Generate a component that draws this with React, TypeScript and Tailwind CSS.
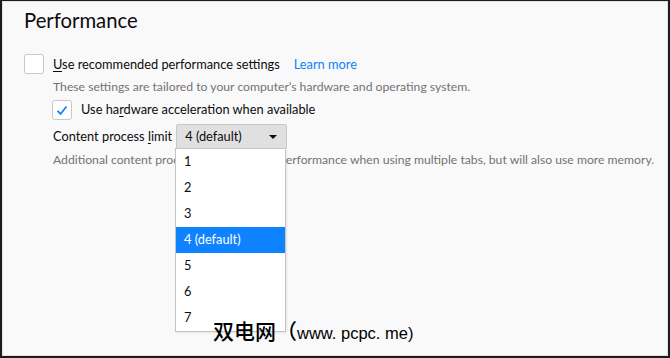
import React from 'react';

const options = ['1', '2', '3', '4 (default)', '5', '6', '7'];

const Checkbox = ({ checked }: { checked?: boolean }) => (
  <div className="w-[20px] h-[20px] shrink-0 rounded-[3px] border border-[#c8c8cc] bg-white flex items-center justify-center">
    {checked && (
      <svg width="12" height="11" viewBox="0 0 12 11">
        <path d="M1.5 5.8 L4.6 9 L10.5 1.5" fill="none" stroke="#0a84ff" strokeWidth="1.8" />
      </svg>
    )}
  </div>
);

export default function App() {
  return (
    <div
      className="relative w-[670px] h-[358px] overflow-hidden border-t border-l-2 border-r-2 border-b-2 border-[#1c1c1c] bg-[#f9f9fa] text-[#0c0c0d]"
      style={{ fontFamily: 'Lato, "Open Sans", sans-serif' }}
    >
      <div className="h-full border border-[#e2e2e4] pl-[21px] pt-[3px]">
        <h1 className="text-[20.3px] leading-[30px] font-normal">Performance</h1>

        <div className="mt-[19px] flex items-center h-[20px]">
          <Checkbox />
          <span className="ml-[9px] mt-[1px] text-[12.8px]">
            <span className="underline underline-offset-2">U</span>se recommended performance settings
          </span>
          <span className="ml-[14px] mt-[1px] text-[12.8px] text-[#0a84ff]">Learn more</span>
        </div>

        <p className="mt-[3px] ml-[29px] h-[20px] leading-[20px] text-[12.2px] text-[#737373]">
          These settings are tailored to your computer’s hardware and operating system.
        </p>

        <div className="mt-[3px] ml-[28px] flex items-center h-[20px]">
          <Checkbox checked />
          <span className="ml-[9px] text-[12.8px]">
            Use ha<span className="underline underline-offset-2">r</span>dware acceleration when available
          </span>
        </div>

        <div className="mt-[4px] ml-[29px] flex items-center h-[25px]">
          <span className="text-[12.8px]">
            Content process <span className="underline underline-offset-2">l</span>imit
          </span>
          <div className="ml-[4px] w-[111px] h-[25px] rounded-[2px] border border-[#c9c9cc] bg-[#e0e0e1] flex items-center justify-between pl-[8px] pr-[9px]">
            <span className="text-[12.8px]">4 (default)</span>
            <svg width="8" height="4" viewBox="0 0 8 4">
              <path d="M0 0 H8 L4 4 Z" fill="#0c0c0d" />
            </svg>
          </div>
        </div>

        <p className="mt-[1px] ml-[29px] h-[20px] leading-[20px] text-[12.2px] text-[#737373] whitespace-nowrap">
          Additional content processes can improve performance when using multiple tabs, but will also use more memory.
        </p>
      </div>

      <ul className="absolute left-[173px] top-[147px] w-[111px] border border-[#c4c4c7] bg-white shadow-[1px_1px_2px_rgba(0,0,0,0.08)]">
        {options.map((o) => (
          <li
            key={o}
            className={`h-[26px] flex items-center pl-[8px] text-[12.8px] ${o === '4 (default)' ? 'bg-[#0f82ff] text-white' : ''}`}
          >
            {o}
          </li>
        ))}
      </ul>

      <div
        className="absolute left-[211px] top-[318px] flex items-baseline leading-[26px] text-black"
        style={{ fontFamily: '"Liberation Sans", "Noto Sans CJK SC", sans-serif' }}
      >
        <span className="text-[21px] font-medium">双电网（</span>
        <span className="text-[16.5px]">www. pcpc. me)</span>
      </div>
    </div>
  );
}
